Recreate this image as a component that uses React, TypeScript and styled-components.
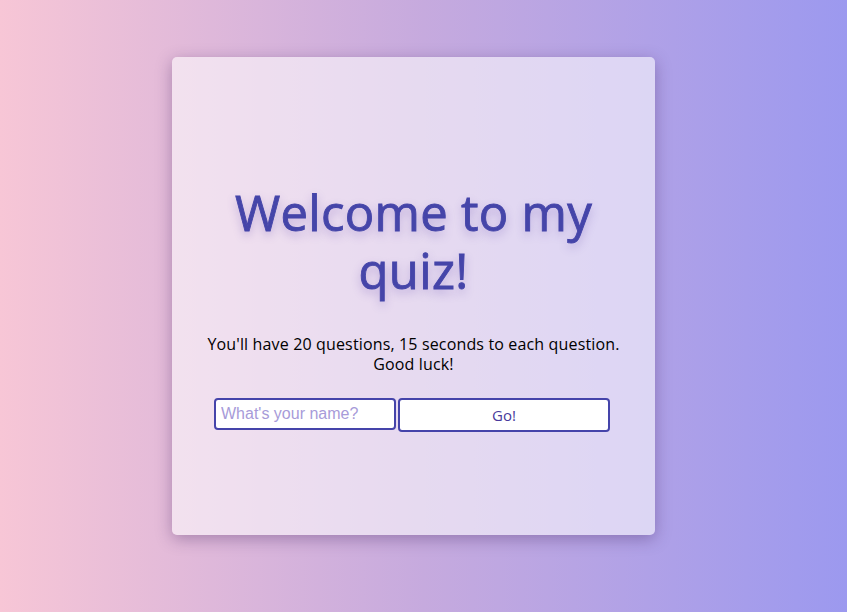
import React from "react";
import styled, { createGlobalStyle } from "styled-components";

const GlobalStyle = createGlobalStyle`
  html, body {
    margin: 0;
    padding: 0;
    height: 100%;
  }
  body {
    background: linear-gradient(to right, #f7c6d6 0%, #c6aade 50%, #9c99ef 100%);
    min-height: 612px;
    font-family: "Open Sans", "Noto Sans", sans-serif;
  }
`;

const Page = styled.main`
  display: flex;
  padding: 57px 0 0 172px;
  box-sizing: border-box;
  width: 847px;
  height: 612px;
`;

const Card = styled.section`
  width: 483px;
  height: 478px;
  box-sizing: border-box;
  background: rgba(255, 255, 255, 0.56);
  border-radius: 5px;
  box-shadow: 0 4px 16px rgba(60, 30, 90, 0.35);
  display: flex;
  flex-direction: column;
  align-items: center;
  padding-top: 126px;
`;

const Title = styled.h1`
  margin: 0;
  font-family: "Open Sans", sans-serif;
  font-weight: 400;
  font-size: 49px;
  letter-spacing: 0.3px;
  line-height: 58px;
  color: #4545a9;
  -webkit-text-stroke: 0.9px #4545a9;
  text-align: center;
  width: 390px;
  text-shadow: 0 4px 10px rgba(90, 60, 170, 0.35);
`;

const Intro = styled.p`
  margin: 35px 0 0;
  font-family: "Open Sans", sans-serif;
  font-size: 16px;
  letter-spacing: 0.15px;
  line-height: 20px;
  color: #000;
  text-align: center;
`;

const Form = styled.form`
  display: flex;
  gap: 2px;
  margin: 24px 3px 0 0;
  align-items: flex-start;
`;

const NameInput = styled.input`
  width: 182px;
  height: 32px;
  box-sizing: border-box;
  border: 2px solid #4544aa;
  border-radius: 4px;
  padding: 0 5px;
  font-family: "Liberation Sans", Arial, sans-serif;
  font-size: 16px;
  background: #fff;
  outline: none;
  &::placeholder {
    color: #a79bd9;
  }
`;

const GoButton = styled.button`
  width: 212px;
  height: 34px;
  box-sizing: border-box;
  border: 2px solid #4544aa;
  border-radius: 4px;
  background: #fff;
  font-family: "Open Sans", sans-serif;
  font-size: 15px;
  color: #47399c;
  cursor: pointer;
`;

export default function App() {
  return (
    <>
      <GlobalStyle />
      <Page>
        <Card>
          <Title>Welcome to my quiz!</Title>
          <Intro>
            You'll have 20 questions, 15 seconds to each question.
            <br />
            Good luck!
          </Intro>
          <Form onSubmit={(e) => e.preventDefault()}>
            <NameInput type="text" placeholder="What's your name?" />
            <GoButton type="submit">Go!</GoButton>
          </Form>
        </Card>
      </Page>
    </>
  );
}
